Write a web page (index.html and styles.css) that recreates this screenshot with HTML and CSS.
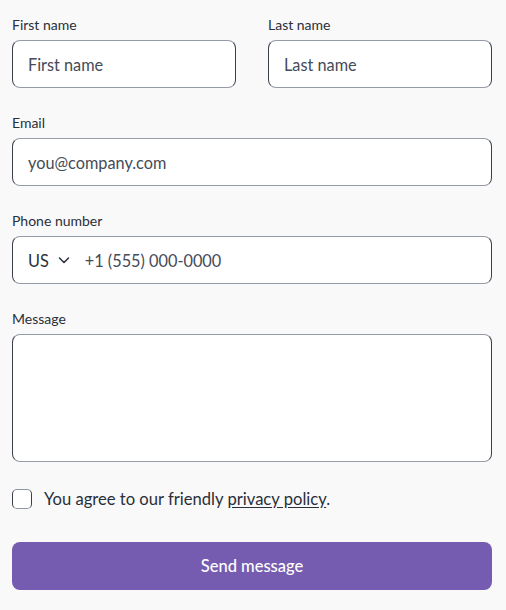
FILE: index.html
```html
<!DOCTYPE html>
<html>
<head>
<meta charset="utf-8">
<link rel="stylesheet" href="styles.css">
</head>
<body>
<form class="form">
  <div class="row">
    <div class="field">
      <label class="label">First name</label>
      <div class="input"><span class="ph">First name</span></div>
    </div>
    <div class="field">
      <label class="label">Last name</label>
      <div class="input"><span class="ph">Last name</span></div>
    </div>
  </div>
  <div class="field">
    <label class="label">Email</label>
    <div class="input"><span class="ph">you@company.com</span></div>
  </div>
  <div class="field">
    <label class="label">Phone number</label>
    <div class="input phone">
      <span class="country">US</span>
      <svg class="chev" width="14" height="14" viewBox="0 0 14 14"><path d="M2.5 5l4.5 4.5L11.5 5" fill="none" stroke="#2f3440" stroke-width="1.6" stroke-linecap="round" stroke-linejoin="round"/></svg>
      <span class="ph">+1 (555) 000-0000</span>
    </div>
  </div>
  <div class="field">
    <label class="label">Message</label>
    <div class="input textarea"></div>
  </div>
  <div class="agree">
    <span class="box"></span>
    <span class="agree-text">You agree to our friendly <u>privacy policy</u>.</span>
  </div>
  <button type="button" class="btn">Send message</button>
</form>
</body>
</html>
```
FILE: styles.css
```css
html, body { margin: 0; padding: 0; }
body {
  background: #f9f9f9;
  font-family: "Lato", "Noto Sans", sans-serif;
  color: #2a2f3a;
  width: 506px;
  height: 610px;
  overflow: hidden;
}
.form {
  padding: 15px 14px 0 12px;
  display: flex;
  flex-direction: column;
  gap: 25px;
}
.row {
  display: grid;
  grid-template-columns: 1fr 1fr;
  gap: 32px;
}
.field { display: flex; flex-direction: column; }
.label {
  font-size: 14px;
  line-height: 20px;
  margin-bottom: 5px;
  color: #2a2f3a;
}
.input {
  height: 48px;
  box-sizing: border-box;
  background: #fff;
  border: 1px solid;
  border-color: #959ba5 #3a3f4b;
  border-radius: 8px;
  display: flex;
  align-items: center;
  padding: 0 15px;
  font-size: 16.3px;
}
.ph { color: #454b58; }
.country { color: #2a2f3a; }
.chev { margin: 0 14px 0 8px; }
.textarea { height: 128px; }
.agree {
  display: flex;
  align-items: center;
  gap: 12px;
  margin-top: 2px;
  font-size: 16.6px;
  color: #2a2f3a;
}
.box {
  width: 18px;
  height: 18px;
  border: 1px solid;
  border-color: #8f95a0 #3a3f4b;
  border-radius: 5px;
  background: #fff;
}
.agree-text u { text-underline-offset: 2px; }
.btn {
  margin-top: 8px;
  height: 48px;
  border: none;
  border-radius: 8px;
  background: #765cb0;
  color: #fff;
  font-family: inherit;
  font-size: 16.5px;
  font-weight: 500;
}
```
